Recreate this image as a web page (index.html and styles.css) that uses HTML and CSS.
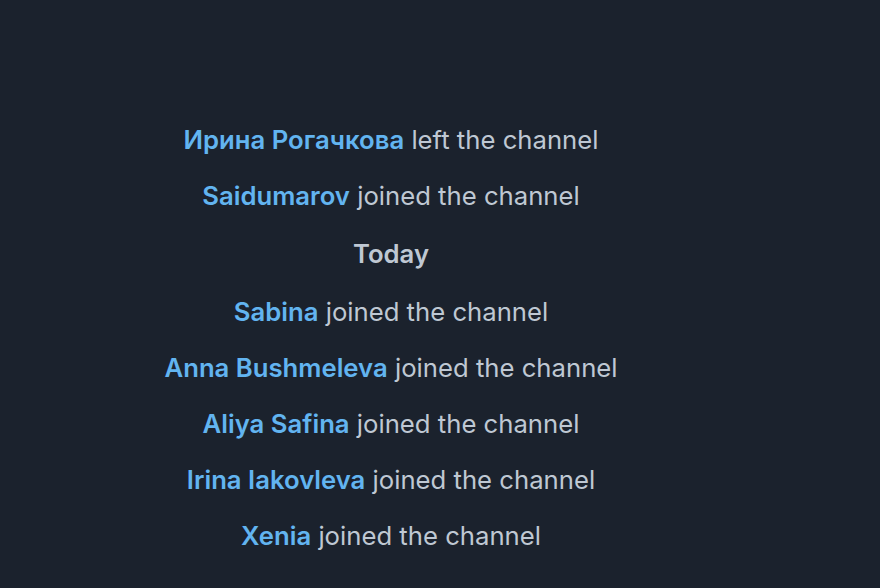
FILE: index.html
```html
<!DOCTYPE html>
<html>
<head>
<meta charset="utf-8">
<link rel="stylesheet" href="styles.css">
</head>
<body>
<div class="chat">
  <div class="list">
    <div class="service"><span class="name">Ирина Рогачкова</span> left the channel</div>
    <div class="service"><span class="name">Saidumarov</span> joined the channel</div>
    <div class="date">Today</div>
    <div class="service"><span class="name">Sabina</span> joined the channel</div>
    <div class="service"><span class="name">Anna Bushmeleva</span> joined the channel</div>
    <div class="service"><span class="name">Aliya Safina</span> joined the channel</div>
    <div class="service"><span class="name">Irina Iakovleva</span> joined the channel</div>
    <div class="service"><span class="name">Xenia</span> joined the channel</div>
  </div>
</div>
</body>
</html>
```
FILE: styles.css
```css
html, body {
  margin: 0;
  padding: 0;
  background: #1b222d;
  width: 880px;
  height: 588px;
  overflow: hidden;
}
.chat {
  width: 782px;
  font-family: Inter, "Noto Sans", sans-serif;
  font-size: 25.7px;
  color: #bfc8d3;
}
.list {
  display: flex;
  flex-direction: column;
  align-items: center;
  padding-top: 112px;
}
.service {
  height: 56px;
  line-height: 56px;
  white-space: nowrap;
}
.date {
  height: 60px;
  line-height: 60px;
  font-weight: 600;
  color: #bfc8d3;
}
.name {
  font-weight: 600;
  color: #62b4f0;
}
```
